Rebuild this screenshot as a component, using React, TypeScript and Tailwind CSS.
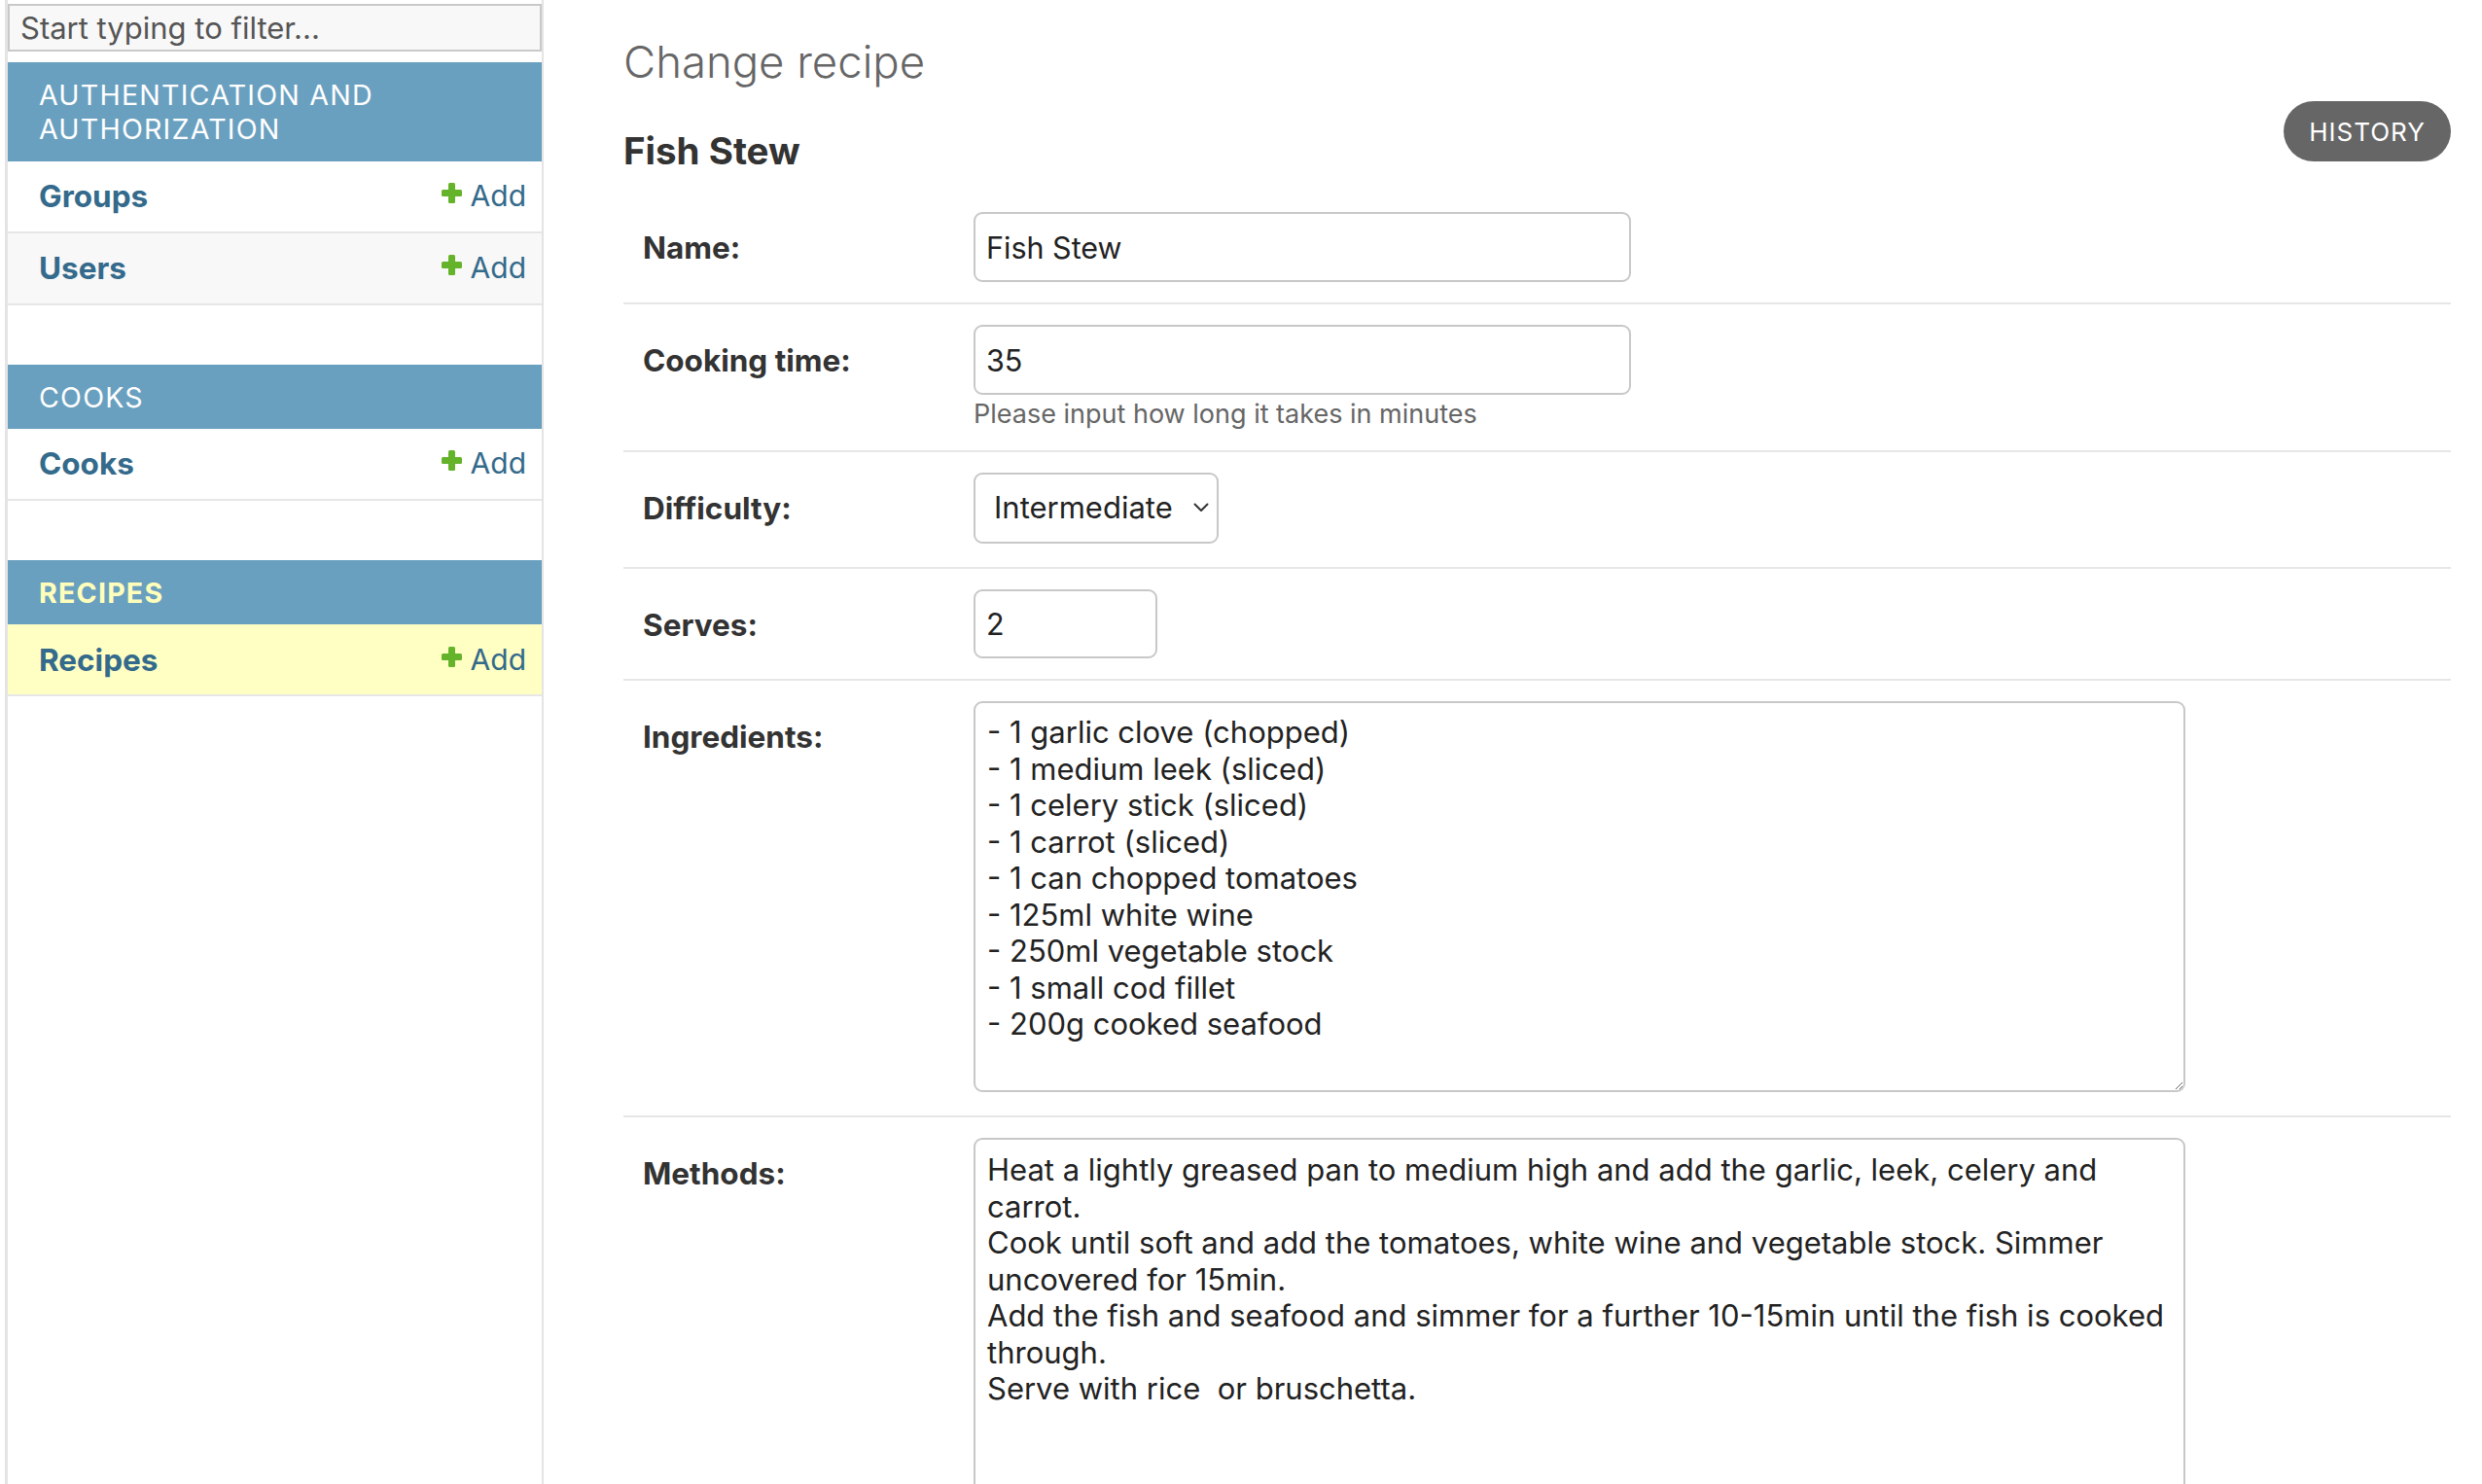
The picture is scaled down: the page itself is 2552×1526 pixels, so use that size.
import { useState } from "react";

const ingredients = [
    "- 1 garlic clove (chopped)",
    "- 1 medium leek (sliced)",
    "- 1 celery stick (sliced)",
    "- 1 carrot (sliced)",
    "- 1 can chopped tomatoes",
    "- 125ml white wine",
    "- 250ml vegetable stock",
    "- 1 small cod fillet",
    "- 200g cooked seafood",
].join("\n");

// line breaks placed where the textarea wraps in the screenshot
const methods = [
    "Heat a lightly greased pan to medium high and add the garlic, leek, celery and",
    "carrot.",
    "Cook until soft and add the tomatoes, white wine and vegetable stock. Simmer",
    "uncovered for 15min.",
    "Add the fish and seafood and simmer for a further 10-15min until the fish is cooked",
    "through.",
    "Serve with rice  or bruschetta.",
].join("\n");

function PlusIcon() {
    return (
        <svg width="21" height="21" viewBox="0 0 21 21" className="mt-[4px] shrink-0">
            <rect x="7" y="0" width="7" height="21" rx="1.5" fill="#64b32b" />
            <rect x="0" y="7" width="21" height="7" rx="1.5" fill="#64b32b" />
        </svg>
    );
}

function NavRow({ name, bg }: { name: string; bg: string }) {
    return (
        <div className={`flex h-[74px] items-center justify-between border-b-2 border-[#e6e6e6] pl-[32px] pr-[16px] ${bg}`}>
            <a className="text-[31.5px] font-bold leading-[35px] text-[#346a8b]">{name}</a>
            <a className="flex items-start gap-[9px] text-[30px] leading-[35px] text-[#346a8b]">
                <PlusIcon />
                <span>Add</span>
            </a>
        </div>
    );
}

function Caption({ children, active }: { children: React.ReactNode; active?: boolean }) {
    return (
        <div
            className={`bg-[#6aa0bf] pb-[15px] pl-[32px] pr-[20px] pt-[16px] text-[28.6px] uppercase leading-[35.3px] tracking-[1.2px] ${
                active ? "font-bold text-[#ffffbb]" : "text-white"
            }`}
        >
            {children}
        </div>
    );
}

function FieldRow({ label, children }: { label: string; children: React.ReactNode }) {
    return (
        <div className="flex border-b-2 border-[#e6e6e6] px-[20px] py-[21px]">
            <label className="w-[340px] shrink-0 pt-[19px] text-[31.5px] font-bold leading-[36px] text-[#333]">{label}</label>
            <div className="flex flex-col">{children}</div>
        </div>
    );
}

export default function App() {
    const [filter, setFilter] = useState("");
    const [name, setName] = useState("Fish Stew");
    const [time, setTime] = useState("35");
    const [difficulty, setDifficulty] = useState("Intermediate");
    const [serves, setServes] = useState("2");
    const [ing, setIng] = useState(ingredients);
    const [meth, setMeth] = useState(methods);

    return (
        <div className="flex h-screen overflow-hidden bg-white font-['Inter','Liberation_Sans',sans-serif] text-[#333]">
            {/* Sidebar */}
            <nav className="ml-[5px] w-[554px] shrink-0 border-l-[3px] border-r-2 border-[#e4e4e4]">
                <input
                    value={filter}
                    onChange={(e) => setFilter(e.target.value)}
                    placeholder="Start typing to filter..."
                    className="mt-[4px] h-[49px] w-full border-2 border-[#c9c9c9] bg-[#f8f8f8] px-[11px] text-[31px] text-[#333] outline-none placeholder:text-[#555]"
                />

                <div className="mb-[61px] mt-[11px]">
                    <Caption>Authentication and Authorization</Caption>
                    <NavRow name="Groups" bg="bg-white" />
                    <NavRow name="Users" bg="bg-[#f8f8f8]" />
                </div>

                <div className="mb-[61px]">
                    <Caption>Cooks</Caption>
                    <NavRow name="Cooks" bg="bg-white" />
                </div>

                <div>
                    <Caption active>Recipes</Caption>
                    <NavRow name="Recipes" bg="bg-[#ffffc4]" />
                </div>
            </nav>

            {/* Content */}
            <main className="flex-1 pl-[82px] pr-[32px]">
                <h1 className="pt-[37px] text-[45.5px] font-light leading-[53px] text-[#666]">Change recipe</h1>

                <div className="mt-[14px] flex items-start justify-between">
                    <h2 className="mt-[31px] text-[38.5px] font-bold leading-[41px] text-[#333]">Fish Stew</h2>
                    <a className="flex h-[62px] w-[172px] items-center justify-center rounded-full bg-[#666] text-[26px] uppercase tracking-[1px] text-white">
                        History
                    </a>
                </div>

                <div className="mt-[21px]">
                    <FieldRow label="Name:">
                        <input
                            value={name}
                            onChange={(e) => setName(e.target.value)}
                            className="h-[72px] w-[676px] rounded-[9px] border-2 border-[#c8c8c8] px-[11px] text-[30.5px] text-[#222] outline-none"
                        />
                    </FieldRow>

                    <FieldRow label="Cooking time:">
                        <input
                            value={time}
                            onChange={(e) => setTime(e.target.value)}
                            className="h-[72px] w-[676px] rounded-[9px] border-2 border-[#c8c8c8] px-[11px] text-[30.5px] text-[#222] outline-none"
                        />
                        <div className="mt-[4px] text-[27px] leading-[32px] text-[#666]">Please input how long it takes in minutes</div>
                    </FieldRow>

                    <FieldRow label="Difficulty:">
                        <div className="relative mb-[3px] w-[252px]">
                            <select
                                value={difficulty}
                                onChange={(e) => setDifficulty(e.target.value)}
                                className="h-[73px] w-full appearance-none rounded-[9px] border-2 border-[#c8c8c8] bg-white pl-[19px] text-[31px] text-[#222] outline-none"
                            >
                                <option>Easy</option>
                                <option>Intermediate</option>
                                <option>Hard</option>
                            </select>
                            <svg width="16" height="10" viewBox="0 0 16 10" className="pointer-events-none absolute right-[10px] top-[31px]">
                                <path d="M1.5 1.5 L8 8 L14.5 1.5" fill="none" stroke="#333" strokeWidth="2" strokeLinecap="round" strokeLinejoin="round" />
                            </svg>
                        </div>
                    </FieldRow>

                    <FieldRow label="Serves:">
                        <input
                            value={serves}
                            onChange={(e) => setServes(e.target.value)}
                            className="h-[71px] w-[189px] rounded-[9px] border-2 border-[#c8c8c8] px-[11px] text-[30.5px] text-[#222] outline-none"
                        />
                    </FieldRow>

                    <FieldRow label="Ingredients:">
                        <textarea
                            value={ing}
                            onChange={(e) => setIng(e.target.value)}
                            className="mb-[3px] h-[402px] w-[1246px] rounded-[9px] border-2 border-[#c8c8c8] px-[12px] pt-[11px] text-[31px] leading-[37.5px] text-[#222] outline-none"
                        />
                    </FieldRow>

                    <FieldRow label="Methods:">
                        <textarea
                            value={meth}
                            wrap="off"
                            onChange={(e) => setMeth(e.target.value)}
                            className="mb-[3px] h-[520px] w-[1246px] overflow-hidden rounded-[9px] border-2 border-[#c8c8c8] px-[12px] pt-[12px] text-[31px] leading-[37.5px] text-[#222] outline-none"
                        />
                    </FieldRow>
                </div>
            </main>
        </div>
    );
}
